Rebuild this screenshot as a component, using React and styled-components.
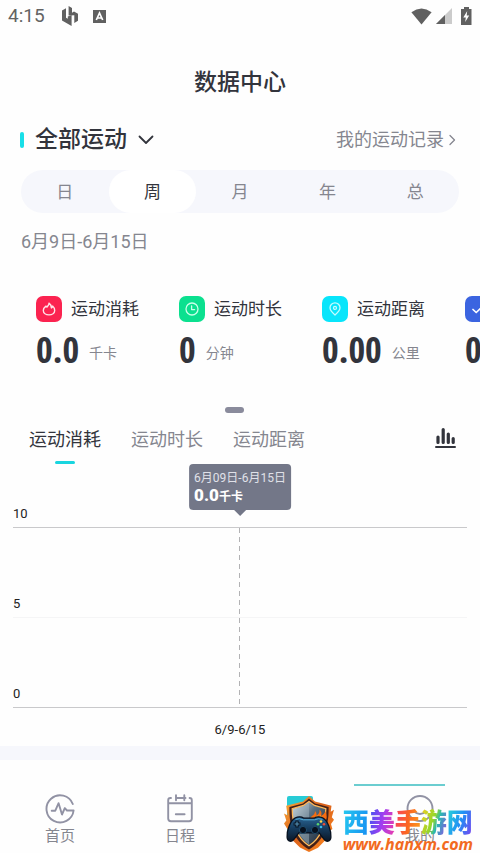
import React, { useState } from 'react';
import styled, { createGlobalStyle } from 'styled-components';

const GlobalStyle = createGlobalStyle`
	* {
		box-sizing: border-box;
	}
	body {
		margin: 0;
		background: #fefefe;
		color: #32343c;
		font-family: Roboto, 'Noto Sans CJK SC', sans-serif;
	}
	button {
		margin: 0;
		padding: 0;
		border: 0;
		background: none;
		color: inherit;
		font: inherit;
		cursor: pointer;
	}
	svg {
		display: block;
		flex: none;
	}
`;

const Page = styled.div`
	position: relative;
	display: flex;
	flex-direction: column;
	min-height: 100vh;
	overflow: hidden;
`;

const StatusBar = styled.div`
	display: flex;
	align-items: center;
	height: 32px;
	padding: 0 4px 0 8px;
	color: #636363;
	font-size: 19px;
	line-height: 34px;
`;

const StatusIcons = styled.div`
	display: flex;
	align-items: center;
	gap: ${(props) => props.$gap}px;
	margin-left: ${(props) => (props.$end ? 'auto' : '16px')};
`;

const PageTitle = styled.h1`
	margin: 0;
	padding: 34px 0 32px;
	font-size: 23px;
	font-weight: 500;
	line-height: 34px;
	text-align: center;
`;

const SectionHead = styled.div`
	display: flex;
	align-items: center;
	justify-content: space-between;
	height: 40px;
	margin-top: -12px;
	padding: 0 24px 0 20px;
`;

const SportPicker = styled.button`
	display: flex;
	align-items: center;
	gap: 11px;
	font-size: 23px;
	font-weight: 500;
	line-height: 34px;

	&::before {
		content: '';
		width: 4px;
		height: 16px;
		border-radius: 2px;
		background: #19dfe8;
	}
`;

const RecordLink = styled.a`
	display: flex;
	align-items: center;
	gap: 4px;
	color: #85868f;
	font-size: 18px;
	line-height: 26px;
	text-decoration: none;
`;

const Segment = styled.div`
	display: flex;
	height: 43px;
	margin: 10px 21px 0;
	border-radius: 22px;
	background: #f6f7fc;
`;

const SegmentButton = styled.button`
	flex: 1;
	border-radius: 22px;
	background: ${(props) => (props.$active ? '#fff' : 'transparent')};
	color: ${(props) => (props.$active ? '#32343c' : '#85868f')};
	font-size: 17px;
	line-height: 45px;
`;

const DateRange = styled.p`
	margin: 0;
	padding: 16px 21px 14px;
	color: #85868f;
	font-size: 18px;
	line-height: 26px;
`;

const CardRow = styled.div`
	display: flex;
	margin-top: 24px;
	padding-left: 36px;
	overflow: hidden;
`;

const Card = styled.div`
	flex: 0 0 143px;
`;

const CardHead = styled.div`
	display: flex;
	align-items: center;
	gap: 9px;
	height: 32px;
	font-size: 17px;
	line-height: 34px;
	white-space: nowrap;
`;

const CardIcon = styled.span`
	display: flex;
	align-items: center;
	justify-content: center;
	width: 26px;
	height: 26px;
	border-radius: 7px;
	background: ${(props) => props.$color};
`;

const CardValue = styled.div`
	display: flex;
	align-items: center;
	gap: 10px;
	height: 56px;
	padding-bottom: 6px;
	white-space: nowrap;
`;

const Amount = styled.span`
	font-family: 'Open Sans Condensed', 'Roboto Condensed', Roboto, sans-serif;
	font-size: 36px;
	font-weight: 700;
	line-height: 50px;
`;

const Unit = styled.span`
	padding-top: 6px;
	color: #85868f;
	font-size: 14px;
	line-height: 20px;
`;

const Handle = styled.div`
	width: 19px;
	height: 6px;
	margin: 26px 0 0 225px;
	border-radius: 3px;
	background: #8a8b9c;
`;

const TabBar = styled.div`
	display: flex;
	align-items: flex-start;
	gap: 30px;
	padding: 14px 24px 0 29px;
`;

const Tab = styled.button`
	display: flex;
	flex-direction: column;
	align-items: center;
	gap: 8px;
	color: ${(props) => (props.$active ? '#32343c' : '#85868f')};
	font-size: 18px;
	line-height: 26px;

	&::after {
		content: '';
		width: 20px;
		height: 3px;
		border-radius: 2px;
		background: ${(props) => (props.$active ? '#19d5df' : 'transparent')};
	}
`;

const ChartButton = styled.button`
	margin-left: auto;
`;

const Chart = styled.div`
	position: relative;
	margin: 0 13px;
	color: #222;
	font-size: 13px;
	line-height: 16px;
`;

const GridRow = styled.div`
	display: flex;
	align-items: flex-end;
	height: ${(props) => (props.$first ? 64 : 90)}px;
	padding-bottom: 5px;
	border-bottom: 1px solid ${(props) => (props.$faint ? '#f5f5f6' : '#c9c9cb')};
`;

const AxisLabel = styled.div`
	padding: 14px 0 8px;
	text-align: center;
`;

// marker hanging over the grid, dashed down to the zero line
const Marker = styled.div`
	position: absolute;
	top: 64px;
	left: 50%;
	width: 1px;
	height: 180px;
	background: repeating-linear-gradient(#b2b2b4 0 5px, transparent 5px 9px);
	transform: translateX(-1px);
`;

const Tooltip = styled.div`
	position: absolute;
	top: 0;
	left: 50%;
	height: 46px;
	padding: 6px 5px;
	border-radius: 4px;
	background: #737788;
	color: #fff;
	transform: translateX(-50%);
	white-space: nowrap;

	&::after {
		content: '';
		position: absolute;
		top: 46px;
		left: 50%;
		border: 6px solid transparent;
		border-top-color: #737788;
		border-bottom: 0;
		transform: translateX(-50%);
	}
`;

const TooltipDate = styled.div`
	color: #e0e1e8;
	font-size: 12px;
	line-height: 16px;
`;

const TooltipValue = styled.div`
	font-size: 12px;
	font-weight: 700;
	line-height: 18px;

	strong {
		font-size: 17px;
	}
`;

const Band = styled.div`
	height: 14px;
	background: #f6f7fc;
`;

const NavBar = styled.nav`
	display: grid;
	grid-template-columns: repeat(4, 1fr);
	align-items: start;
	flex: 1;
	padding: 33px 0 6px;
`;

const NavItem = styled.button`
	display: flex;
	flex-direction: column;
	align-items: center;
	color: #85868f;
	font-size: 15px;
	line-height: 22px;
`;

const TealRule = styled.div`
	position: absolute;
	right: 35px;
	bottom: 67px;
	width: 91px;
	height: 2px;
	background: #6bcdd0;
`;

const Watermark = styled.div`
	position: absolute;
	right: 7px;
	bottom: 0;
	display: flex;
	align-items: flex-end;
	gap: 8px;
	pointer-events: none;
`;

const WatermarkText = styled.div`
	display: flex;
	flex-direction: column;
`;

const WatermarkName = styled.span`
	font-size: 26px;
	font-weight: 900;
	line-height: 24px;
	white-space: nowrap;
`;

const Glyph = styled.span`
	background: linear-gradient(${(props) => props.$fill});
	background-clip: text;
	color: transparent;
`;

const WatermarkUrl = styled.span`
	color: #f26a21;
	font-family: 'Open Sans', sans-serif;
	font-size: 16px;
	font-style: italic;
	font-weight: 700;
	line-height: 18px;
	white-space: nowrap;
`;

const line = {
	fill: 'none',
	stroke: 'currentColor',
	strokeLinecap: 'round',
	strokeLinejoin: 'round'
};

const FlameIcon = () => (
	<svg width="16" height="16" viewBox="0 0 16 16" {...line} stroke="#ffe3e8" strokeWidth="1.4">
		<path d="M8 2.2C8.2 4 6.8 4.8 6 6.1L4.9 5.1C3.3 6.3 2.3 7.7 2.3 9.5c0 2.7 2.6 4.4 5.7 4.4s5.7-1.7 5.7-4.4c0-1.7-.8-3.2-2.1-4.4-.1 1-.5 1.5-1.2 1.9C10.3 5 9.5 3.1 8 2.2z" />
	</svg>
);

const ClockIcon = () => (
	<svg width="16" height="16" viewBox="0 0 16 16" {...line} stroke="#c9ffe9" strokeWidth="1.3">
		<circle cx="8" cy="8" r="6" />
		<path d="M7.6 4.8v3.8h3" />
	</svg>
);

const PinIcon = () => (
	<svg width="16" height="16" viewBox="0 0 16 16" {...line} stroke="#c5fbff" strokeWidth="1.3">
		<path d="M8 14C5 11.4 3 9.2 3 6.8a5 5 0 0 1 10 0c0 2.4-2 4.6-5 7.2z" />
		<circle cx="8" cy="6.9" r="1.5" />
	</svg>
);

const CheckIcon = () => (
	<svg width="16" height="16" viewBox="0 0 16 16" {...line} stroke="#fff" strokeWidth="1.7">
		<path d="M3 8.5l3.2 3L13 5" />
	</svg>
);

const HomeIcon = () => (
	<svg width="32" height="32" viewBox="0 0 32 32" {...line} stroke="#9192a4" strokeWidth="1.9">
		<path d="M28.8 11A13.6 13.6 0 1 0 29.6 17.5H23l-2.2-2.4-2.8 6.4-3.4-11.3-3.3 7.5H7.7" />
	</svg>
);

const ScheduleIcon = () => (
	<svg width="32" height="32" viewBox="0 0 32 32" {...line} stroke="#9192a4" strokeWidth="1.9">
		<path d="M7 5H6.4Q4.2 5 4.2 7.2v18.3q0 2.7 2.7 2.7h18.2q2.7 0 2.7-2.7V7.2Q27.8 5 25.6 5M12 5h9.5M4.2 10.2h23.6M12 2.3v4.9M20.3 2.3v4.9M11.8 21.3h8.8" />
	</svg>
);

const ProfileIcon = () => (
	<svg width="32" height="32" viewBox="0 0 32 32" {...line} stroke="#9192a4" strokeWidth="1.9">
		<circle cx="16" cy="15.5" r="12.5" />
		<path d="M10 18.5q6 5 12 0" />
	</svg>
);

const ShopIcon = () => (
	<svg width="32" height="48" viewBox="0 0 32 48">
		<rect x="3" y="3" width="26" height="42" rx="2" fill="#27cbd5" />
	</svg>
);

const ShieldLogo = () => (
	<svg width="52" height="58" viewBox="0 0 52 58">
		<defs>
			<linearGradient id="fire" x1="0" y1="0" x2="1" y2="1">
				<stop offset="0" stopColor="#ffb13b" />
				<stop offset=".45" stopColor="#d9601b" />
				<stop offset="1" stopColor="#ff8a1f" />
			</linearGradient>
			<linearGradient id="steel" x1="0" y1="0" x2="1" y2="1">
				<stop offset="0" stopColor="#e4edf2" />
				<stop offset=".4" stopColor="#5b7182" />
				<stop offset="1" stopColor="#15202e" />
			</linearGradient>
			<linearGradient id="pad" x1="0" y1="0" x2="0" y2="1">
				<stop offset="0" stopColor="#2a6594" />
				<stop offset=".5" stopColor="#153a5c" />
				<stop offset="1" stopColor="#0b1727" />
			</linearGradient>
		</defs>
		<path d="M26 1L32 6.5l16.5 4.2-.8 6 3.3-2-2.2 7.5 2.2 2.6-3 4.2 1.4 5-4.8 3.5-1.6 7L35 52.8 26 57l-9-4.5-8.2-8L5 35l-4-6.5 2.3-3L1 18.6l3.5 1.6-1.3-9.5L20 6.5z" fill="url(#fire)" />
		<path d="M26 3.6l6 4.8 13.6 3.7C46 29 42 45.5 26 54.5 10 45.5 6 29 6.4 12.1L20 8.4z" fill="#432018" />
		<path d="M26 6.5l5.5 4 11.3 3.2C42.6 28.5 39 42.5 26 50.8 13 42.5 9.4 28.5 9.2 13.7l11.3-3.2z" fill="url(#steel)" stroke="#ffb95a" strokeWidth="1.3" />
		<path d="M26 7.5v42C15.5 42 11 30 10.4 14.8l10.3-3z" fill="#a6bac6" opacity=".45" />
		<path d="M26 25c2-5 6-4 6-9 2 2 1.5 4 1.5 5 2-2 3.5-3.5 3-6.5 2 2 2.5 4 1.5 6.5 2-1 4-3 4.5-5 1.3 5 2.5 7-1.5 12z" fill="#f76d12" />
		<path d="M31 25c0-3 3-3 3-5 1 2 0 3 1.5 3 1-1 2-1.5 2-3 1.5 2 1 4 0 6z" fill="#ffd23c" />
		<path d="M12 23q5-2.4 9 .2h10q4-2.6 9-.2c4.5 2.5 8.4 12.5 7.9 19.2-.3 4.6-4.7 5.4-7.2 1.7l-4.5-6H15.8l-4.5 6c-2.5 3.7-6.9 2.9-7.2-1.7C3.6 35.5 7.5 25.5 12 23z" fill="url(#pad)" stroke="#07111f" strokeWidth="1.3" />
		<path d="M12.5 24.4q4-1.6 7.7.4h11.6q3.7-2 7.7-.4" fill="none" stroke="#5db5de" strokeWidth=".9" />
		<path d="M14 25.6v6.8M10.6 29h6.8" stroke="#07111f" strokeWidth="3.2" />
		<path d="M14 26.5v5M11.5 29h5" stroke="#5595ba" strokeWidth="1.1" />
		<circle cx="20" cy="35" r="3.6" fill="#07111f" stroke="#1f4d6e" />
		<circle cx="32" cy="35" r="3.6" fill="#07111f" stroke="#1f4d6e" />
		<circle cx="38" cy="26.5" r="1.3" fill="#ffd54d" />
		<circle cx="35" cy="29.2" r="1.3" fill="#58d46d" />
		<circle cx="41" cy="29.2" r="1.3" fill="#f24e37" />
		<circle cx="38" cy="32" r="1.3" fill="#38b9ed" />
	</svg>
);

const cards = [
	{ name: '运动消耗', value: '0.0', unit: '千卡', color: '#fb2350', Icon: FlameIcon },
	{ name: '运动时长', value: '0', unit: '分钟', color: '#0be08f', Icon: ClockIcon },
	{ name: '运动距离', value: '0.00', unit: '公里', color: '#08e5fb', Icon: PinIcon },
	{ name: '', value: '0', unit: '', color: '#3b64e0', Icon: CheckIcon }
];

const periods = [ '日', '周', '月', '年', '总' ];
const tabs = [ '运动消耗', '运动时长', '运动距离' ];

const glyphs = [
	[ '西', '100deg, #25c8ef, #168cf2' ],
	[ '美', '100deg, #3d56f0, #a13df0 50%, #f23ca6' ],
	[ '手', '100deg, #f63f65, #fb6720 50%, #fba51f' ],
	[ '游', '110deg, #f7cf20, #93d62b 45%, #29b8b3 60%, #a03df0' ],
	[ '网', '110deg, #27d9d4, #218ff5 50%, #8638ed' ]
];

const App = () => {
	const [ period, setPeriod ] = useState('周');
	const [ tab, setTab ] = useState('运动消耗');

	return (
		<Page>
			<GlobalStyle />
			<StatusBar>
				<span>4:15</span>
				<StatusIcons $gap={14}>
					<svg width="18" height="20" viewBox="-1 0 18 20" fill="#606060">
						<path d="M0 4.5L4 2.3v9.5l1.8 1V10.500L9.600 9v11L0 14.500z" />
						<path d="M6.600 0L10 2v4.800L12 5.500l4 2.300v7L12.300 17V9.200L6.600 9.500z" />
					</svg>
					<svg width="13" height="13" viewBox="0 0 13 13">
						<path d="M0 0h13v13H0z" fill="#606060" />
						<path d="M3.3 10L6.5 3l3.2 7M4.5 8h4" fill="none" stroke="#fff" strokeWidth="1.7" />
					</svg>
				</StatusIcons>
				<StatusIcons $end $gap={4}>
					<svg width="21" height="17" viewBox="0 0 21 17">
						<path d="M.4 4.2Q10.5-3.2 20.6 4.2L10.5 16.5z" fill="#606060" />
					</svg>
					<svg width="16" height="16" viewBox="0 0 16 16">
						<path d="M16 0v16H0z" fill="#cbcbcb" />
						<path d="M9 7v9H0z" fill="#606060" />
					</svg>
					<svg width="20" height="18" viewBox="0 0 20 18">
						<path d="M8 0h5v2h2.5v16H5V2h3z" fill="#606060" />
						<path d="M11.2 4L7.3 10.5h2.5L9.2 15l4-6.500h-2.500z" fill="#fff" />
					</svg>
				</StatusIcons>
			</StatusBar>

			<PageTitle>数据中心</PageTitle>

			<SectionHead>
				<SportPicker>
					全部运动
					<svg width="16" height="10" viewBox="0 0 16 10" {...line} strokeWidth="1.8">
						<path d="M1.5 1.5L8 8l6.5-6.5" />
					</svg>
				</SportPicker>
				<RecordLink href="#records">
					我的运动记录
					<svg width="8" height="12" viewBox="0 0 8 12" {...line} strokeWidth="1.3">
						<path d="M2 1.5L6.5 6 2 10.5" />
					</svg>
				</RecordLink>
			</SectionHead>

			<Segment>
				{periods.map((item) => (
					<SegmentButton key={item} $active={item === period} onClick={() => setPeriod(item)}>
						{item}
					</SegmentButton>
				))}
			</Segment>
			<DateRange>6月9日-6月15日</DateRange>

			<CardRow>
				{cards.map(({ name, value, unit, color, Icon }) => (
					<Card key={color}>
						<CardHead>
							<CardIcon $color={color}>
								<Icon />
							</CardIcon>
							{name}
						</CardHead>
						<CardValue>
							<Amount>{value}</Amount>
							<Unit>{unit}</Unit>
						</CardValue>
					</Card>
				))}
			</CardRow>
			<Handle />

			<TabBar>
				{tabs.map((item) => (
					<Tab key={item} $active={item === tab} onClick={() => setTab(item)}>
						{item}
					</Tab>
				))}
				<ChartButton aria-label="柱状图">
					<svg width="21" height="22" viewBox="0 0 21 22" {...line} strokeWidth="3.2">
						<path d="M3 10v5.5M8.2 2.5v13M13.3 7v8.5M18.2 11.5v4" />
						<path d="M1 20h19" strokeWidth="2" />
					</svg>
				</ChartButton>
			</TabBar>

			<Chart>
				<GridRow $first>10</GridRow>
				<GridRow $faint>5</GridRow>
				<GridRow>0</GridRow>
				<AxisLabel>6/9-6/15</AxisLabel>
				<Marker />
				<Tooltip>
					<TooltipDate>6月09日-6月15日</TooltipDate>
					<TooltipValue>
						<strong>0.0</strong>千卡
					</TooltipValue>
				</Tooltip>
			</Chart>
			<Band />

			<NavBar>
				<NavItem>
					<HomeIcon />
					首页
				</NavItem>
				<NavItem>
					<ScheduleIcon />
					日程
				</NavItem>
				<NavItem aria-label="商城">
					<ShopIcon />
				</NavItem>
				<NavItem>
					<ProfileIcon />
					我的
				</NavItem>
			</NavBar>

			<TealRule />
			<Watermark>
				<ShieldLogo />
				<WatermarkText>
					<WatermarkName>
						{glyphs.map(([ char, fill ]) => (
							<Glyph key={char} $fill={fill}>
								{char}
							</Glyph>
						))}
					</WatermarkName>
					<WatermarkUrl>www.hanxm.com</WatermarkUrl>
				</WatermarkText>
			</Watermark>
		</Page>
	);
};

export default App;
